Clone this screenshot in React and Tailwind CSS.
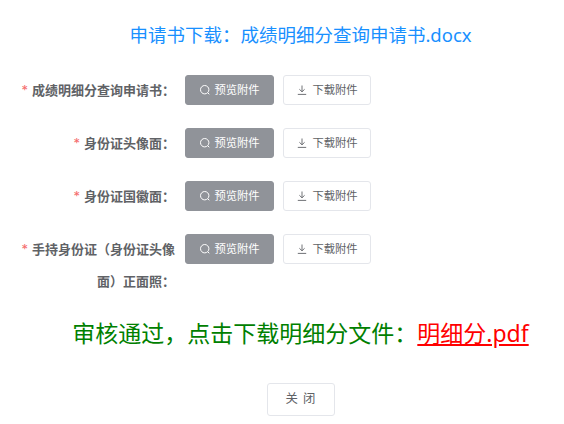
import React from "react";

function SearchIcon() {
  return (
    <svg width="12" height="12" viewBox="0 0 12 12" fill="none" stroke="currentColor" strokeWidth="1" className="shrink-0">
      <circle cx="5.7" cy="5.7" r="4.2" />
      <path d="M8.8 8.8l1.5 1.5" />
    </svg>
  );
}

function DownloadIcon() {
  return (
    <svg width="12" height="12" viewBox="0 0 12 12" fill="none" stroke="currentColor" strokeWidth="0.9" className="shrink-0">
      <path d="M6 1.5v6.2M3.4 5.3 6 7.8l2.6-2.5M1.8 10.4h8.4" />
    </svg>
  );
}

function Row({ label, tall }) {
  return (
    <div className={`flex items-start ${tall ? "h-[64px] mt-px mb-[20px]" : "h-[30px] mb-[23px]"}`}>
      <div className="w-[155px] text-right text-[13px] font-bold leading-[32px] text-[#606266] mr-[10px] ml-[20px] -mt-px">
        <span className="text-[#f56c6c] mr-[4px] font-normal">*</span>
        {label}
      </div>
      <button className="flex items-center justify-center w-[89px] h-[30px] rounded-[3px] bg-[#909399] border border-[#909399] text-white text-[11.3px] gap-[3px]">
        <SearchIcon />
        <span>预览附件</span>
      </button>
      <button className="flex items-center justify-center w-[88px] h-[30px] ml-[9px] rounded-[3px] bg-white border border-[#e4e6eb] text-[#606266] text-[11.3px] gap-[4px]">
        <DownloadIcon />
        <span>下载附件</span>
      </button>
    </div>
  );
}

export default function App() {
  return (
    <div className="w-[564px] h-[424px] bg-white overflow-hidden font-['Inter','Noto_Sans_CJK_SC',sans-serif]">
      <div className="pt-[22px] h-[75px] text-center pl-[37px] text-[18.5px] leading-[26px] text-[#1890ff] font-['Noto_Sans','Noto_Sans_CJK_SC',sans-serif]">
        <span>申请书下载：成绩明细分查询申请书.docx</span>
      </div>
      <Row label="成绩明细分查询申请书：" />
      <Row label="身份证头像面：" />
      <Row label="身份证国徽面：" />
      <Row label="手持身份证（身份证头像面）正面照：" tall />
      <div className="flex justify-center pl-[37px] h-[65px] text-[23px] leading-[30px] font-['Noto_Sans','Noto_Sans_CJK_SC',sans-serif] text-[#008000]">
        <span>审核通过，点击下载明细分文件：</span>
        <a className="text-[#ff0000] underline">明细分.pdf</a>
      </div>
      <div className="flex justify-center pl-[37px]">
        <button className="w-[68px] h-[33px] rounded-[3px] bg-white border border-[#e4e6eb] text-[#606266] text-[12.4px] tracking-[5px] pl-[5px]">
          关闭
        </button>
      </div>
    </div>
  );
}
